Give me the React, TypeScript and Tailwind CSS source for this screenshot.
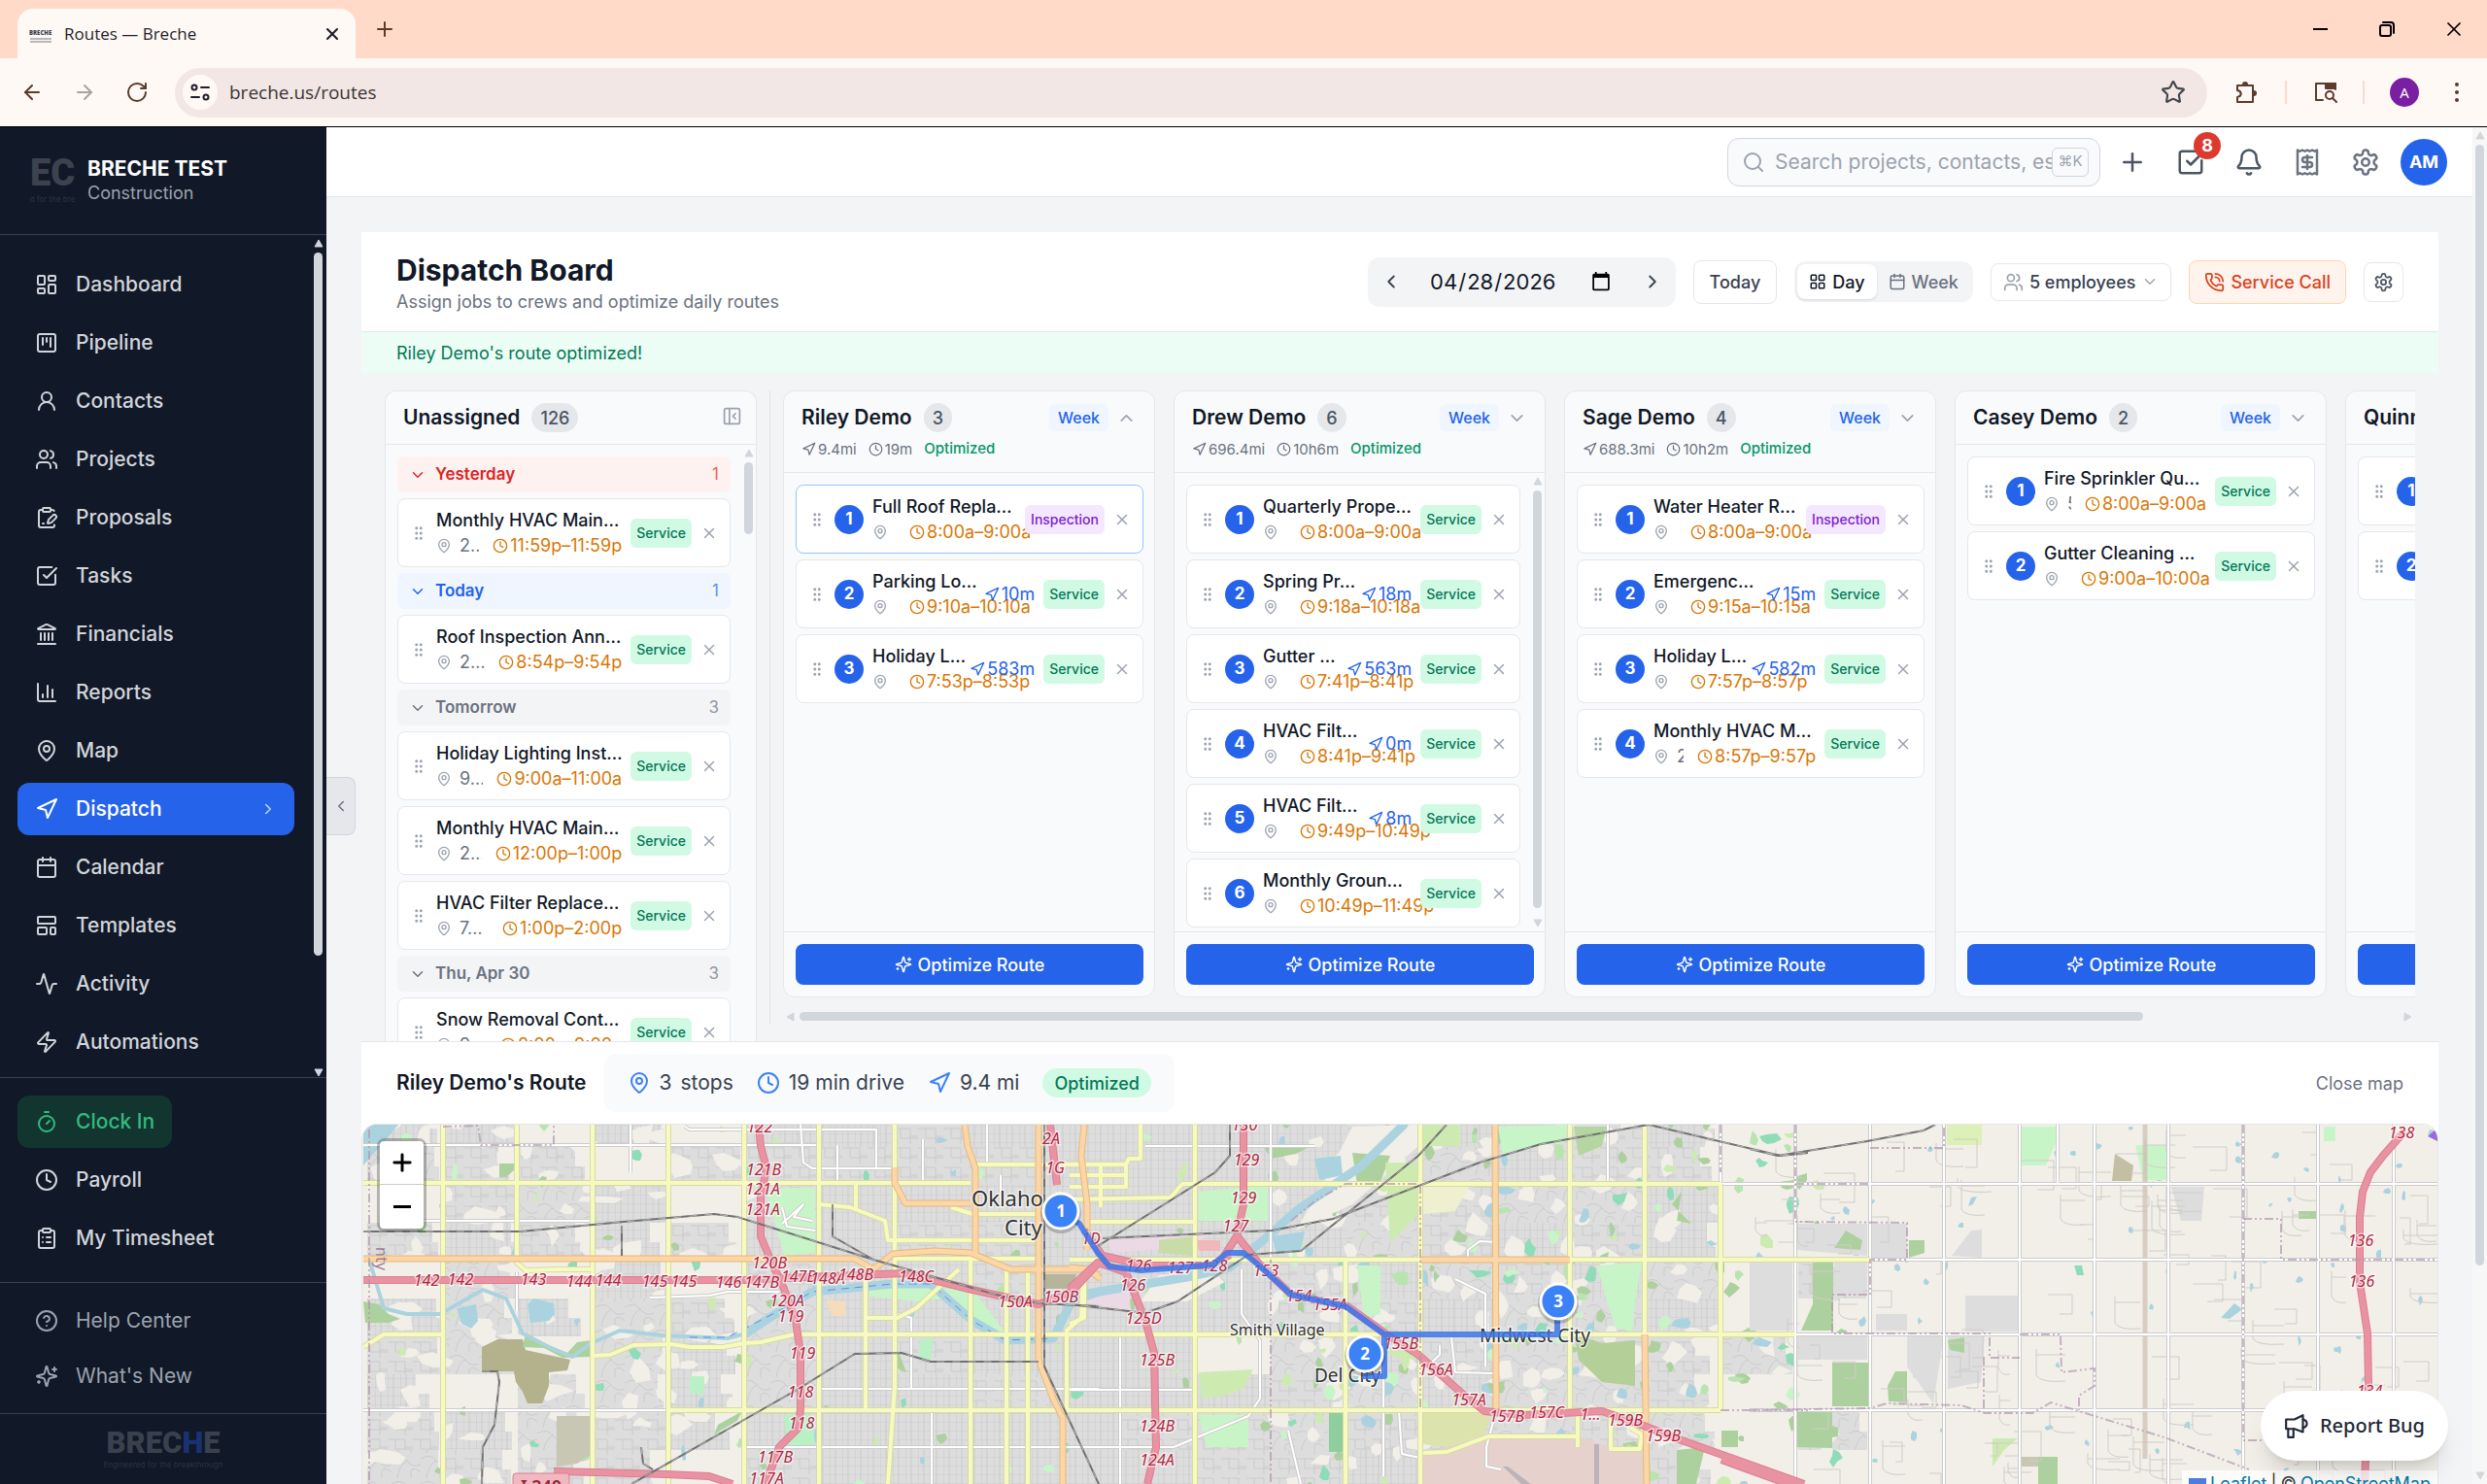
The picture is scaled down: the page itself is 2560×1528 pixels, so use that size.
import React from "react";
import {
  Activity, ArrowLeft, ArrowRight, Bell, Calendar, ChartColumn, ChevronDown, ChevronLeft, ChevronRight, ChevronUp,
  CircleHelp, ClipboardList, ClipboardPenLine, Clock, GripVertical, Landmark, LayoutDashboard, LayoutGrid,
  LayoutTemplate, MapPin, Navigation, PanelLeftClose, PhoneCall, Plus, Receipt, RotateCw, Search, SquareCheckBig,
  SquareKanban, Star, Timer, UserRound, Users, X, Zap,
} from "lucide-react";

type IconProps = { className?: string };
type IconType = React.ComponentType<IconProps>;

/* ---------- Icons ---------- */

const stroke = {
  fill: "none", stroke: "currentColor", strokeWidth: 2, strokeLinecap: "round" as const, strokeLinejoin: "round" as const,
};

function Sparkles({ className }: IconProps) {
  return (
    <svg viewBox="0 0 24 24" className={className} {...stroke} aria-hidden="true">
      <path d="M9.937 15.5A2 2 0 0 0 8.5 14.063l-6.135-1.582a.5.5 0 0 1 0-.962L8.5 9.936A2 2 0 0 0 9.937 8.5l1.582-6.135a.5.5 0 0 1 .963 0L14.063 8.5A2 2 0 0 0 15.5 9.937l6.135 1.581a.5.5 0 0 1 0 .964L15.5 14.063a2 2 0 0 0-1.437 1.437l-1.582 6.135a.5.5 0 0 1-.963 0z" />
      <path d="M20 3v4M22 5h-4M4 17v2M5 18H3" />
    </svg>
  );
}

function Gear({ className }: IconProps) {
  return (
    <svg viewBox="0 0 24 24" className={className} {...stroke} aria-hidden="true">
      <path d="M12.22 2h-.44a2 2 0 0 0-2 2v.18a2 2 0 0 1-1 1.73l-.43.25a2 2 0 0 1-2 0l-.15-.08a2 2 0 0 0-2.73.73l-.22.38a2 2 0 0 0 .73 2.73l.15.1a2 2 0 0 1 1 1.72v.51a2 2 0 0 1-1 1.74l-.15.09a2 2 0 0 0-.73 2.73l.22.38a2 2 0 0 0 2.73.73l.15-.08a2 2 0 0 1 2 0l.43.25a2 2 0 0 1 1 1.73V20a2 2 0 0 0 2 2h.44a2 2 0 0 0 2-2v-.18a2 2 0 0 1 1-1.73l.43-.25a2 2 0 0 1 2 0l.15.08a2 2 0 0 0 2.73-.73l.22-.39a2 2 0 0 0-.73-2.73l-.15-.08a2 2 0 0 1-1-1.74v-.5a2 2 0 0 1 1-1.74l.15-.09a2 2 0 0 0 .73-2.73l-.22-.38a2 2 0 0 0-2.73-.73l-.15.08a2 2 0 0 1-2 0l-.43-.25a2 2 0 0 1-1-1.73V4a2 2 0 0 0-2-2z" />
      <circle cx="12" cy="12" r="3" />
    </svg>
  );
}

function MegaphoneIcon({ className }: IconProps) {
  return (
    <svg viewBox="0 0 24 24" className={className} {...stroke} aria-hidden="true">
      <path d="M2 6h8l8-4v16l-8-3H2z" />
      <path d="M4 15v8h5v-8" />
      <path d="M18 6c5 1 5 7 0 8" />
    </svg>
  );
}

function PuzzleIcon({ className }: IconProps) {
  return (
    <svg viewBox="0 0 24 24" className={className} {...stroke} aria-hidden="true">
      <path d="M3 5h16v17H3v-5c5-1 5-6 0-7z" />
      <path d="M9 4a2 2 0 0 1 4 0zM20 11a2 2 0 0 1 0 4z" fill="currentColor" />
    </svg>
  );
}

function TabSearchIcon({ className }: IconProps) {
  return (
    <svg viewBox="0 0 24 24" className={className} {...stroke} aria-hidden="true">
      <path d="M9 20H2V3h20v6" />
      <path d="M12 3h10v5H12z" fill="currentColor" />
      <circle cx="16" cy="15" r="4" />
      <path d="m19 18 4 4" />
    </svg>
  );
}

/* ---------- Browser chrome ---------- */

function BrowserChrome() {
  return (
    <header className="shrink-0 border-b border-black bg-[#fff9f5] font-['Open_Sans','Noto_Sans',sans-serif]">
      <div className="flex h-[60px] items-end bg-[#ffdac8] pl-[18px]">
        <div className="flex h-[51px] w-[348px] items-center rounded-t-2xl bg-[#fff9f5] pr-[14px] pl-3 text-[#1f1f2b]">
          <svg viewBox="0 0 24 24" className="mr-3 size-6" aria-hidden="true">
            <text x="0" y="13" fontSize="6" fontWeight="800" fill="#3b3f4d">BRECHE</text>
            <path d="M1 17h22M1 20h22" stroke="#b9b7bb" strokeWidth="2" />
          </svg>
          <span className="flex-1 text-[17px]">Routes — Breche</span>
          <button aria-label="Close tab"><X className="size-5" strokeWidth={2.5} /></button>
        </div>
        <button aria-label="New tab" className="mb-[18px] ml-[18px] text-[#5d3a2c]"><Plus className="size-6" /></button>
        <div className="mb-[18px] ml-auto flex items-center gap-[45px] pr-[22px] text-black">
          <button aria-label="Minimize" className="flex size-6 items-center justify-center"><span className="h-[2px] w-[15px] bg-black" /></button>
          <button aria-label="Restore" className="flex size-6 items-center justify-center">
            <svg viewBox="0 0 24 24" className="size-6" {...stroke}><rect x="5" y="8" width="11" height="11" rx="2" /><path d="M8 5h8a3 3 0 0 1 3 3v8" /></svg>
          </button>
          <button aria-label="Close window" className="flex size-6 items-center justify-center"><X className="size-6" strokeWidth={1.75} /></button>
        </div>
      </div>
      <div className="flex h-[70px] items-center rounded-tr-2xl pr-[19px] pl-[21px] text-[#5d3a2c]">
        <div className="flex items-center gap-[30px]">
          <button aria-label="Back"><ArrowLeft className="size-6" /></button>
          <button aria-label="Forward" className="text-[#a8a39f]"><ArrowRight className="size-6" /></button>
          <button aria-label="Reload"><RotateCw className="size-6" /></button>
        </div>
        <div className="ml-[27px] flex h-[51px] flex-1 items-center rounded-full bg-[#f2e7e4] pr-[22px] pl-2">
          <span className="flex size-9 items-center justify-center rounded-full bg-[#fff9f5] text-[#1f1f2b]">
            <svg viewBox="0 0 24 24" className="size-6" {...stroke}><circle cx="6" cy="7" r="2.5" /><path d="M13 7h8M3 17h8" /><circle cx="18" cy="17" r="2.5" /></svg>
          </span>
          <label htmlFor="address" className="sr-only">Address</label>
          <input id="address" defaultValue="breche.us/routes" className="ml-3 h-9 w-0 flex-1 bg-transparent text-[19px] text-[#3d3436] outline-none" />
          <button aria-label="Bookmark" className="text-[#44474f]"><Star className="size-[26px]" /></button>
        </div>
        <div className="ml-7 flex items-center">
          <button aria-label="Extensions"><PuzzleIcon className="size-6" /></button>
          <span className="mx-7 h-6 w-[2px] bg-[#fbd9c9]" />
          <button aria-label="Search tabs"><TabSearchIcon className="size-6" /></button>
          <span className="mx-[26px] h-6 w-[2px] bg-[#f3dcd2]" />
          <span className="flex size-[30px] items-center justify-center rounded-full bg-[#7b1fa2] text-[15px] text-white">A</span>
          <button aria-label="Browser menu" className="ml-[27px]">
            <svg viewBox="0 0 24 24" className="size-6" fill="currentColor"><circle cx="12" cy="4" r="2" /><circle cx="12" cy="12" r="2" /><circle cx="12" cy="20" r="2" /></svg>
          </button>
        </div>
      </div>
    </header>
  );
}

/* ---------- Scroll bars ---------- */

const ARROWS = { up: "M5 1 9 8H1z", down: "M5 9 9 2H1z", left: "M1 5 8 1v8z", right: "M9 5 2 1v8z" };

function Arrow({ dir }: { dir: keyof typeof ARROWS }) {
  return (
    <svg viewBox="0 0 10 10" className="size-[10px] shrink-0" aria-hidden="true">
      <path d={ARROWS[dir]} fill="#d1d5dc" stroke="#d1d5dc" strokeLinejoin="round" />
    </svg>
  );
}

function VScroll({ thumb, className = "", end = true }: { thumb: string; className?: string; end?: boolean }) {
  return (
    <div aria-hidden="true" className={"flex w-[15px] shrink-0 flex-col items-center " + className}>
      <Arrow dir="up" />
      <div className="mt-1 flex w-[9px] flex-1 flex-col">
        <div className={"w-full rounded-full bg-[#d1d5dc] " + thumb} />
      </div>
      {end && <Arrow dir="down" />}
    </div>
  );
}

/* ---------- Sidebar ---------- */

const NAV: [string, IconType][] = [
  ["Dashboard", LayoutDashboard], ["Pipeline", SquareKanban], ["Contacts", UserRound], ["Projects", Users],
  ["Proposals", ClipboardPenLine], ["Tasks", SquareCheckBig], ["Financials", Landmark], ["Reports", ChartColumn],
  ["Map", MapPin], ["Dispatch", Navigation], ["Calendar", Calendar], ["Templates", LayoutTemplate],
  ["Activity", Activity], ["Automations", Zap],
];

function NavItem({ label, Icon, className }: { label: string; Icon: IconType; className: string }) {
  return (
    <a href="#" className={"flex items-center gap-[18px] rounded-xl px-[18px] text-[21px] " + className}>
      <Icon className="size-6 shrink-0" />
      <span>{label}</span>
      {label === "Dispatch" && <ChevronRight className="ml-auto size-[18px] text-blue-200" />}
    </a>
  );
}

function Sidebar() {
  return (
    <aside className="flex w-[336px] shrink-0 flex-col bg-[#111827]">
      <div className="flex h-[111px] shrink-0 items-center border-b border-[#374151] px-[30px]">
        <div className="w-[48px] text-center text-[#3c434f]">
          <div className="font-['Roboto',sans-serif] text-[38px] leading-[34px] font-black">EC</div>
          <div className="mt-1 text-[8px] leading-[12px] whitespace-nowrap text-[#2d3542]">d for the bre</div>
        </div>
        <div className="ml-3">
          <div className="text-[21px] leading-[26px] font-bold text-white">BRECHE TEST</div>
          <div className="text-[18px] leading-[24px] text-[#9ca3af]">Construction</div>
        </div>
      </div>
      <div className="flex min-h-0 flex-1 pt-1 pr-px">
        <nav className="flex flex-1 flex-col gap-[6px] pt-5 pr-[17px] pl-[18px]">
          {NAV.map(([label, Icon]) => (
            <NavItem
              key={label} label={label} Icon={Icon}
              className={label === "Dispatch" ? "h-[54px] shrink-0 bg-[#2563eb] font-medium text-white" : "h-[54px] shrink-0 font-medium text-[#d1d5db]"}
            />
          ))}
        </nav>
        <VScroll thumb="h-[724px]" />
      </div>
      <nav className="flex flex-col items-start gap-[6px] border-t border-[#374151] px-[18px] py-[18px]">
        <NavItem label="Clock In" Icon={Timer} className="h-[54px] bg-[#12352f] font-medium text-[#34b981]" />
        <NavItem label="Payroll" Icon={Clock} className="h-[54px] font-medium text-[#d1d5db]" />
        <NavItem label="My Timesheet" Icon={ClipboardList} className="h-[54px] font-medium text-[#d1d5db]" />
      </nav>
      <nav className="flex flex-col gap-[6px] border-t border-[#374151] px-[18px] py-[13px]">
        <NavItem label="Help Center" Icon={CircleHelp} className="h-[51px] text-[#9ca3af]" />
        <NavItem label="What's New" Icon={Sparkles} className="h-[51px] text-[#9ca3af]" />
      </nav>
      <div className="h-[73px] border-t border-[#374151] pt-[15px] text-center">
        <div className="font-['Roboto',sans-serif] text-[31px] leading-[30px] font-black text-[#3a414e]">
          BREC<span className="text-[#1b3272]">H</span>E
        </div>
        <div className="text-[8px] leading-[14px] text-[#2b3442]">Engineered for the breakthrough</div>
      </div>
    </aside>
  );
}

/* ---------- Top bar ---------- */

function TopBar() {
  return (
    <div className="flex h-[72px] shrink-0 items-center justify-end border-b border-[#e5e7eb] bg-white pr-[26px] text-[#4b5563]">
      <div className="flex h-[50px] w-[384px] items-center rounded-xl border border-[#d1d5dc] bg-[#f9fafb] pr-[11px] pl-[14px]">
        <Search className="size-6 shrink-0 text-[#9ca3af]" />
        <label htmlFor="search" className="sr-only">Search</label>
        <input id="search" placeholder="Search projects, contacts, estimates..." className="ml-[10px] w-0 flex-1 bg-transparent text-[21px] outline-none placeholder:text-[#9ca3af]" />
        <kbd className="flex h-[30px] w-[38px] items-center justify-center rounded-md border border-[#d1d5dc] font-['Inter','DejaVu_Sans',sans-serif] text-[15px] text-[#9ca3af]">⌘K</kbd>
      </div>
      <div className="ml-[18px] flex items-center gap-[30px] pr-9">
        <button aria-label="Add"><Plus className="size-[30px]" /></button>
        <button aria-label="Tasks" className="relative">
          <SquareCheckBig className="size-[30px]" />
          <span className="absolute -top-4 -right-4 flex size-7 items-center justify-center rounded-full bg-[#dc3a2f] text-[18px] font-bold text-white">8</span>
        </button>
        <button aria-label="Notifications"><Bell className="size-[30px]" /></button>
        <button aria-label="Receipts"><Receipt className="size-[30px] text-[#6b7280]" /></button>
        <button aria-label="Settings"><Gear className="size-[30px] text-[#6b7280]" /></button>
      </div>
      <button className="-ml-[15px] flex size-12 items-center justify-center rounded-full bg-[#2563eb] text-[18px] font-bold text-white">AM</button>
    </div>
  );
}

/* ---------- Board header ---------- */

function BoardHeader() {
  return (
    <div className="flex h-[103px] shrink-0 items-center justify-between border-b border-[#e5e7eb] bg-white px-9">
      <div className="pt-[2px]">
        <h1 className="text-[30px] leading-[38px] font-bold text-[#111827]">Dispatch Board</h1>
        <p className="text-[18px] leading-[27px] text-[#6b7280]">Assign jobs to crews and optimize daily routes</p>
      </div>
      <div className="flex items-center gap-[18px] text-[18px] text-[#374151]">
        <div className="flex h-[51px] w-[317px] items-center justify-between rounded-xl bg-[#f3f4f6] px-[13px]">
          <button aria-label="Previous day"><ChevronLeft className="size-[22px]" /></button>
          <label htmlFor="day" className="sr-only">Day</label>
          <input id="day" type="date" defaultValue="2026-04-28" className="w-[190px] bg-transparent text-[22px] text-[#111827] outline-none" />
          <button aria-label="Next day"><ChevronRight className="size-[22px]" /></button>
        </div>
        <button className="h-[45px] rounded-lg border border-[#e5e7eb] px-4 font-medium">Today</button>
        <div className="flex h-[42px] items-center rounded-xl bg-[#f3f4f6] p-[3px]">
          <button className="flex h-9 items-center gap-[6px] rounded-lg bg-white px-3 font-medium text-[#111827] shadow-sm"><LayoutGrid className="size-[18px]" />Day</button>
          <button className="flex h-9 items-center gap-[6px] px-3 font-medium text-[#6b7280]"><Calendar className="size-[18px]" />Week</button>
        </div>
        <button className="flex h-[39px] items-center gap-[6px] rounded-lg border border-[#e5e7eb] px-3 font-medium">
          <Users className="size-[21px] text-[#9ca3af]" />5 employees<ChevronDown className="size-[18px] text-[#9ca3af]" />
        </button>
        <button className="flex h-[45px] items-center gap-[6px] rounded-lg border border-[#fed7aa] bg-[#fff4ed] px-[15px] font-medium text-[#d9431e]">
          <PhoneCall className="size-[21px]" />Service Call
        </button>
        <button aria-label="Board settings" className="flex size-[41px] items-center justify-center rounded-lg border border-[#e5e7eb]"><Gear className="size-[21px] text-[#4b5563]" /></button>
      </div>
    </div>
  );
}

/* ---------- Job cards ---------- */

type Job = { title: string; time: string; addr?: string; travel?: string; kind?: "Inspection" | "Service" };

function JobCard({ job, n, active }: { job: Job; n?: number; active?: boolean }) {
  return (
    <article className={"flex h-[71px] shrink-0 items-center gap-[9px] rounded-lg border bg-white px-3 " + (active ? "border-[#93c5fd]" : "border-[#e5e7eb]")}>
      <GripVertical className="size-[18px] shrink-0 text-[#9ca3af]" />
      {n && <span className="flex size-[30px] shrink-0 items-center justify-center rounded-full bg-[#2563eb] text-[17px] font-bold text-white">{n}</span>}
      <div className="min-w-0 flex-1 whitespace-nowrap">
        <h4 className="text-[18px] leading-[26px] font-medium text-[#111827]">{job.title}</h4>
        <div className="flex items-center text-[18px] leading-[26px]">
          <MapPin className="mr-2 size-4 shrink-0 text-[#9ca3af]" />
          <span className="mr-[14px] min-w-0 flex-1 overflow-hidden text-[#6b7280]">{job.addr}</span>
          <span className="flex shrink-0 items-center gap-[2px] text-[#d97706]"><Clock className="size-4" />{job.time}</span>
        </div>
      </div>
      {job.travel && (
        <span className="flex shrink-0 items-center gap-[2px] text-[18px] text-[#2563eb]"><Navigation className="size-4" />{job.travel}</span>
      )}
      <span className={"z-1 flex h-[30px] shrink-0 items-center rounded-md px-[6px] text-[14px] font-medium " + (job.kind === "Inspection" ? "bg-[#f3e8ff] text-[#7e22ce]" : "bg-[#d1fae5] text-[#047857]")}>
        {job.kind ?? "Service"}
      </span>
      <button aria-label={"Remove " + job.title} className="shrink-0"><X className="size-[18px] text-[#9ca3af]" /></button>
    </article>
  );
}

const GROUPS: { name: string; count: number; tone: string; jobs: Job[] }[] = [
  { name: "Yesterday", count: 1, tone: "bg-[#fef2f0] text-[#dc2626]", jobs: [{ title: "Monthly HVAC Main…", addr: "2..", time: "11:59p–11:59p" }] },
  { name: "Today", count: 1, tone: "bg-[#eff6ff] text-[#2563eb]", jobs: [{ title: "Roof Inspection Ann…", addr: "2…", time: "8:54p–9:54p" }] },
  {
    name: "Tomorrow", count: 3, tone: "bg-[#f3f4f6] text-[#6b7280]", jobs: [
      { title: "Holiday Lighting Inst…", addr: "9…", time: "9:00a–11:00a" },
      { title: "Monthly HVAC Main…", addr: "2…", time: "12:00p–1:00p" },
      { title: "HVAC Filter Replace…", addr: "7…", time: "1:00p–2:00p" },
    ],
  },
  { name: "Thu, Apr 30", count: 3, tone: "bg-[#f3f4f6] text-[#6b7280]", jobs: [{ title: "Snow Removal Cont…", addr: "9…", time: "8:00a–9:00a" }] },
];

function Count({ value }: { value: number }) {
  return <span className="flex h-[30px] min-w-[29px] items-center justify-center rounded-full bg-[#e5e7eb] px-[9px] text-[18px] font-medium text-[#4b5563]">{value}</span>;
}

function Unassigned() {
  return (
    <section className="flex w-[383px] shrink-0 flex-col rounded-t-xl border border-b-0 border-[#e5e7eb] bg-[#f9fafb]">
      <div className="flex h-[55px] shrink-0 items-center gap-3 border-b border-[#e5e7eb] pr-[14px] pl-[18px]">
        <h2 className="text-[21px] font-semibold text-[#111827]">Unassigned</h2>
        <Count value={126} />
        <button aria-label="Collapse unassigned" className="mb-1 ml-auto"><PanelLeftClose className="size-[21px] text-[#9ca3af]" /></button>
      </div>
      <div className="flex min-h-0 flex-1">
        <div className="flex min-h-0 flex-1 flex-col gap-[6px] overflow-hidden py-3 pr-[11px] pl-3">
          {GROUPS.map((g) => (
            <React.Fragment key={g.name}>
              <button className={"flex h-[37px] shrink-0 items-center rounded-md px-3 text-[17px] font-semibold " + g.tone}>
                <ChevronDown className="mr-[9px] size-[18px]" />
                {g.name}
                <span className="ml-auto font-normal opacity-70">{g.count}</span>
              </button>
              {g.jobs.map((j) => <JobCard key={j.title} job={j} />)}
            </React.Fragment>
          ))}
        </div>
        <VScroll thumb="h-[74px]" className="pt-1" end={false} />
      </div>
    </section>
  );
}

type Crew = { name: string; miles?: string; drive?: string; open?: boolean; scroll?: boolean; total: number; jobs: Job[] };

const CREWS: Crew[] = [
  {
    name: "Riley Demo", miles: "9.4mi", drive: "19m", open: true, total: 3, jobs: [
      { title: "Full Roof Repla…", time: "8:00a–9:00a", kind: "Inspection" },
      { title: "Parking Lo…", time: "9:10a–10:10a", travel: "10m" },
      { title: "Holiday L…", time: "7:53p–8:53p", travel: "583m" },
    ],
  },
  {
    name: "Drew Demo", miles: "696.4mi", drive: "10h6m", scroll: true, total: 6, jobs: [
      { title: "Quarterly Prope…", time: "8:00a–9:00a" },
      { title: "Spring Pr…", time: "9:18a–10:18a", travel: "18m" },
      { title: "Gutter …", time: "7:41p–8:41p", travel: "563m" },
      { title: "HVAC Filt…", time: "8:41p–9:41p", travel: "0m" },
      { title: "HVAC Filt…", time: "9:49p–10:49p", travel: "8m" },
      { title: "Monthly Groun…", time: "10:49p–11:49p" },
    ],
  },
  {
    name: "Sage Demo", miles: "688.3mi", drive: "10h2m", total: 4, jobs: [
      { title: "Water Heater R…", time: "8:00a–9:00a", kind: "Inspection" },
      { title: "Emergenc…", time: "9:15a–10:15a", travel: "15m" },
      { title: "Holiday L…", time: "7:57p–8:57p", travel: "582m" },
      { title: "Monthly HVAC M…", addr: "2", time: "8:57p–9:57p" },
    ],
  },
  {
    name: "Casey Demo", total: 2, jobs: [
      { title: "Fire Sprinkler Qu…", addr: "5", time: "8:00a–9:00a" },
      { title: "Gutter Cleaning …", time: "9:00a–10:00a" },
    ],
  },
  {
    name: "Quinn Demo", total: 2, jobs: [
      { title: "Gutter Repair …", time: "8:00a–9:00a" },
      { title: "Window Seal …", time: "9:00a–10:00a" },
    ],
  },
];

function CrewColumn({ crew }: { crew: Crew }) {
  const Chevron = crew.open ? ChevronUp : ChevronDown;
  return (
    <section className="flex w-[383px] shrink-0 flex-col rounded-xl border border-[#e5e7eb] bg-[#f9fafb]">
      <div className="shrink-0 border-b border-[#e5e7eb] px-[18px]">
        <div className="flex h-[54px] items-center">
          <h2 className="mr-3 text-[21px] font-semibold text-[#111827]">{crew.name}</h2>
          <Count value={crew.total} />
          <button className="ml-auto h-7 rounded-md bg-[#eff6ff] px-[9px] text-[16px] font-medium text-[#2563eb]">Week</button>
          <button aria-label={"Toggle " + crew.name} className="ml-2"><Chevron className="size-[21px] text-[#9ca3af]" /></button>
        </div>
        {crew.miles && (
          <div className="flex h-[29px] items-start gap-3 text-[15px] leading-[10px] text-[#6b7280]">
            <span className="flex h-[11px] items-center gap-[2px]"><Navigation className="size-[15px]" />{crew.miles}</span>
            <span className="flex h-[11px] items-center gap-[2px]"><Clock className="size-[15px]" />{crew.drive}</span>
            <span className="font-medium text-[#059669]">Optimized</span>
          </div>
        )}
      </div>
      <div className="flex min-h-0 flex-1">
        <div className={"flex min-w-0 flex-1 flex-col gap-[6px] overflow-hidden py-3 pl-3 " + (crew.scroll ? "pr-[10px]" : "pr-[11px]")}>
          {crew.jobs.map((j, i) => <JobCard key={i} job={j} n={i + 1} active={crew.open && i === 0} />)}
        </div>
        {crew.scroll && <VScroll thumb="h-[430px]" className="py-1" />}
      </div>
      <div className="shrink-0 border-t border-[#e5e7eb] py-3 pr-[11px] pl-3">
        <button className="flex h-[42px] w-full items-center justify-center gap-[6px] rounded-lg bg-[#2563eb] text-[18px] font-medium text-white">
          <Sparkles className="size-[18px]" />Optimize Route
        </button>
      </div>
    </section>
  );
}

function Board() {
  return (
    <div className="flex h-[688px] shrink-0 overflow-hidden pt-[18px] pr-6 pl-6">
      <Unassigned />
      <div className="mx-[13px] mb-[18px] w-px shrink-0 bg-[#e0e2e7]" />
      <div className="mb-[18px] flex min-w-0 flex-1 flex-col">
        <div className="flex min-h-0 flex-1 gap-[19px] overflow-hidden">
          {CREWS.map((c) => <CrewColumn key={c.name} crew={c} />)}
        </div>
        <div aria-hidden="true" className="mt-[15px] flex h-3 items-start gap-1 px-[3px]">
          <Arrow dir="left" />
          <div className="flex-1"><div className="h-[9px] w-[84%] rounded-full bg-[#d1d5dc]" /></div>
          <Arrow dir="right" />
        </div>
      </div>
    </div>
  );
}

/* ---------- Map ---------- */

/* Each sheet of the map has its own drawing grid; SHEET gives its left edge. */
const SHEET = { W: -2, C: 728, E: 1428 };
type Sheet = keyof typeof SHEET;
const px = (s: Sheet, x: number) => Math.round(SHEET[s] + x / 2.063);
const py = (y: number) => Math.round(y / 3 - 18);
const line = (s: Sheet, pts: string) => {
  const v = pts.split(" ").map(Number);
  let d = "";
  for (let i = 0; i < v.length; i += 2) d += (i ? "L" : "M") + px(s, v[i]) + " " + py(v[i + 1]);
  return d;
};

type Shape = [Sheet, string];

const YELLOW: Shape[] = [
  ["W", "175 55 175 1164"], ["W", "333 55 333 480 350 505 420 500 490 500"], ["W", "493 55 493 1164"], ["W", "653 55 653 1164"],
  ["W", "814 55 814 1164"], ["W", "973 55 973 1164"], ["W", "1134 55 1134 860 1120 1164"], ["W", "1295 460 1295 1164"],
  ["W", "6 235 1295 235"], ["W", "6 740 50 702 175 702"], ["W", "493 768 530 765 580 735 660 732 700 742 770 742 815 728 850 725 920 702 1568 702"],
  ["W", "653 937 1568 937"], ["W", "973 300 1040 310 1115 350 1120 410 1440 410"], ["W", "1053 240 1053 320"], ["W", "1073 530 1073 937"],
  ["W", "1073 652 1140 652 1180 620 1270 500"], ["W", "1134 468 1440 468"], ["W", "1300 178 1568 178"], ["W", "1255 310 1300 330 1440 330"],
  ["W", "1372 500 1372 1164"], ["W", "1418 500 1418 1164"], ["W", "1500 937 1500 690 1530 650 1535 520"],
  ["C", "0 178 120 178 125 160 150 160 150 55"], ["C", "0 285 215 280 240 238 1383 238"], ["C", "0 210 120 210"], ["C", "0 245 120 245 120 178"], ["C", "65 178 65 310"],
  ["C", "35 353 270 353"], ["C", "267 55 267 1164"], ["C", "0 470 745 470"], ["C", "1063 470 1383 470"],
  ["C", "0 703 1540 703"], ["C", "585 470 585 1164"], ["C", "745 55 745 1164"], ["C", "1063 55 1063 937"],
  ["C", "1222 55 1222 703"], ["C", "1383 238 1383 937"], ["C", "0 937 1383 937"], ["C", "750 1068 800 1065 890 1018 1078 1018"],
  ["C", "1078 950 1078 1050"], ["C", "1150 950 1150 1057 1210 1057 1215 1010 1190 990"], ["C", "1383 470 1568 470"],
  ["C", "0 670 30 650 30 540"], ["E", "0 472 255 472"], ["E", "0 702 90 702"],
];
const WHITE: Shape[] = [
  ["W", "6 118 970 118"], ["W", "100 352 490 352"], ["W", "6 937 653 937"], ["W", "975 870 1568 870"], ["W", "820 1050 1568 1050"],
  ["W", "573 55 573 200"], ["W", "935 55 940 170 960 188 1130 188"], ["W", "690 60 700 68 1095 68 1095 188"], ["W", "1012 118 1012 240"],
  ["W", "333 510 333 630"], ["W", "615 587 740 582 780 570 890 570"], ["W", "1170 870 1170 650 1140 640"], ["W", "1213 937 1213 1164"],
  ["W", "895 310 905 370 965 380"], ["W", "895 360 940 300 920 340 960 350"], ["W", "1195 100 1195 235"], ["W", "1330 55 1330 170"], ["W", "1360 210 1360 300"],
  ["C", "160 120 520 120"], ["C", "427 55 427 470"], ["C", "0 872 265 872"], ["C", "0 1050 220 1050 380 955 405 900 405 720 365 640 365 500"],
  ["C", "107 703 107 1164"], ["C", "845 470 845 440 870 415 905 418"], ["C", "820 530 883 575 883 800"], ["C", "785 735 785 765 760 800"],
  ["C", "810 710 820 820 900 822"], ["C", "667 703 667 1140"], ["C", "700 940 705 1070 745 1082"], ["C", "465 1000 490 1164"],
  ["C", "905 940 885 1050 885 1110 915 1120"], ["C", "1143 55 1143 235"], ["C", "1383 55 1383 238"], ["C", "1383 238 1568 238"],
  ["E", "0 238 1464 238"], ["E", "255 472 1464 472"], ["E", "90 703 1464 703"], ["E", "0 937 1464 937"],
  ["E", "97 55 97 1164"], ["E", "255 55 255 1164"], ["E", "413 55 413 1164"], ["E", "573 55 573 1164"], ["E", "655 55 655 238"],
  ["E", "733 55 733 1164"], ["E", "890 55 890 1164"], ["E", "1047 55 1047 1164"], ["E", "1207 55 1207 1164"], ["E", "1367 55 1367 1164"],
];
const ORANGE: Shape[] = [
  ["W", "6 468 1050 468 1090 500 1130 452 1220 445 1295 450 1380 500 1540 500 1568 520"], ["W", "1283 55 1290 120 1305 190 1305 450"],
  ["W", "1134 185 1134 235 1158 298 1295 298"], ["W", "1440 55 1440 780 1470 900 1492 960 1492 1164"],
  ["C", "30 55 25 150 38 300 38 440"], ["C", "0 495 40 500 65 530"],
  ["C", "745 470 1063 470"], ["C", "903 55 905 937"], ["C", "1222 703 1225 1164"],
];
const RED: Shape[] = [
  ["W", "846 55 850 120 862 190 850 280 850 400 870 470 900 560 925 660 935 760 935 930 930 990 890 1050 860 1164"],
  ["W", "6 533 820 535 900 528 1100 515 1160 512 1300 565 1440 610 1510 570 1568 480"],
  ["W", "410 1125 500 1128 650 1135 740 1140 790 1164"], ["W", "1465 55 1480 240"],
  ["C", "370 55 370 300 355 400 325 465"], ["C", "355 395 400 480 470 580 590 615 670 700 740 765 830 880 880 940 960 950 1130 940 1220 985 1300 1030 1560 1164"],
  ["C", "0 560 60 480 120 510 160 660 180 760 183 1050 165 1164"], ["C", "30 380 70 460 160 490 300 490 340 455"],
  ["E", "-60 1090 100 1172"],
  ["E", "1390 75 1345 150 1318 200 1302 260 1295 340 1295 420 1295 540 1312 700 1315 860 1305 1164"],
];
const RAIL: Shape[] = [
  ["W", "6 385 340 385 560 355 750 330 800 340 900 385 1090 470 1350 580 1440 605 1568 615"], ["W", "555 365 555 460"], ["W", "1003 300 1003 400 1090 470"],
  ["W", "575 1164 930 870 1050 762 1150 760 1210 787 1440 787"], ["W", "258 815 290 815 295 850 285 980 260 1050 258 1164"], ["W", "1453 55 1453 800 1568 1164"],
  ["W", "597 1050 600 1100 620 1120"],
  ["C", "340 55 340 150 310 200 60 430"], ["C", "70 405 430 380 560 345 870 170 1000 115 1230 55 1510 150 1568 140"],
  ["C", "800 55 740 150 490 445 380 455 230 600 160 635 0 610"], ["E", "0 130 60 150 250 105 370 72 395 55"],
];
const RIVER: Shape[] = [
  ["W", "820 700 900 620 960 570 1130 545 1210 545 1300 660 1370 720 1470 715 1510 600 1568 570"],
  ["C", "0 585 250 525 340 495 420 400 480 320 620 180 710 55"],
];
const CREEK: Shape[] = [
  ["W", "20 480 50 620 100 640 170 640 260 565 310 590 345 700 400 740 450 770 490 730 550 690 640 705 780 715 820 700"],
];
const AREAS: [Sheet, string, string][] = [
  ["W", "6 55 80 55 60 90 6 180", "#aad3df"], ["W", "865 270 900 250 965 250 965 450 900 460", "#c8f5c8"],
  ["W", "258 740 290 717 345 717 350 750 445 780 440 812 400 820 400 860 385 915 355 915 345 880 330 850 325 815 258 815", "#b3b28c"],
  ["W", "417 955 490 955 490 1070 460 1100 417 1110", "#c7c7b4"], ["W", "1080 545 1210 545 1240 590 1180 600 1080 585", "#c8f5c8"],
  ["W", "1225 560 1300 560 1370 700 1300 670", "#c8f5c8"], ["W", "205 620 245 610 250 660 235 685 215 670", "#aad3df"], ["W", "355 610 370 590 410 605 412 640 400 660 360 665", "#aad3df"],
  ["W", "990 595 1030 600 1030 645 1000 645", "#f5dcba"], ["W", "1455 515 1520 515 1510 560 1455 560", "#b8b49a"], ["W", "1190 715 1215 715 1210 780 1185 775", "#b9f0c6"],
  ["W", "700 830 730 830 730 885 700 885", "#b9f0c6"], ["W", "900 950 960 950 965 1050 905 1050", "#b9f0c6"], ["W", "295 175 325 175 325 195 310 215 295 215", "#add19e"],
  ["W", "6 600 40 610 60 640 85 655 60 665 10 665", "#add19e"], ["W", "350 700 400 735 440 760 460 725 490 720 490 770 430 775 390 745 345 740", "#add19e"], ["W", "760 980 810 940 800 970 750 1010", "#add19e"],
  ["W", "1130 710 1130 800 1160 820", "#add19e"],
  ["C", "275 260 420 240 420 350 275 350", "#c8f5c8"], ["C", "80 410 300 390 260 430 90 450", "#ecd9e6"], ["C", "20 600 125 560 130 630", "#ecd9e6"],
  ["C", "190 520 300 505 330 540 250 600 150 600", "#f2efe9"],
  ["C", "270 410 320 410 320 445 275 445", "#f0b8b8"], ["C", "190 410 260 400 260 460 190 450", "#c8dca8"], ["C", "430 400 500 385 490 440 440 450", "#aad3df"],
  ["C", "600 60 745 55 740 120 600 300 480 380 540 230", "#f2efe9"],
  ["C", "520 160 575 150 580 210 530 225", "#aad3df"], ["C", "410 120 520 115 480 145 430 160", "#add19e"], ["C", "600 140 680 150 660 230 610 240", "#add19e"],
  ["C", "745 55 830 55 830 120 745 120", "#cdebb0"], ["C", "670 170 740 170 740 330 680 420", "#cdebb0"], ["C", "750 245 850 240 820 320 750 330", "#eef0cf"],
  ["C", "910 60 1060 55 1050 110 980 120 920 150", "#c8f5c8"], ["C", "1070 60 1140 60 1130 120 1080 150", "#b5d6a0"], ["C", "610 490 660 490 660 640 625 650", "#c8f5c8"],
  ["C", "1120 490 1215 480 1200 600 1195 690 1160 680 1140 600", "#c8f5c8"], ["C", "1070 700 1130 730 1200 720 1200 860 1130 850 1080 780", "#b5cf98"], ["C", "670 750 740 755 740 780 690 775", "#cdebb0"],
  ["C", "275 820 390 810 370 870 330 890 280 900", "#cdebb0"], ["C", "275 950 380 950 380 1050 290 1050", "#c8f5c8"], ["C", "550 945 582 945 582 1065 550 1065", "#8fcf9d"],
  ["C", "750 940 900 940 880 1010 800 1050 750 1040", "#dde3ac"], ["C", "750 1068 890 1018 1080 1018 1150 1050 1220 1060 1222 1164 750 1164", "#e6d1cd"],
  ["C", "930 1110 980 1164 960 1164 920 1110", "#bbb4ba"], ["C", "1115 1040 1125 1040 1125 1164 1115 1164", "#bbb4ba"],
  ["C", "1290 1060 1350 1050 1330 1164 1290 1164", "#add19e"], ["C", "1385 1000 1420 1000 1420 1050 1385 1050", "#add19e"], ["C", "1280 300 1300 260 1290 350 1320 360", "#add19e"],
  ["E", "0 480 90 480 90 690 0 690", "#dddddd"], ["E", "135 480 178 480 178 690 110 690 135 610", "#add19e"], ["E", "180 480 250 480 250 580 180 580", "#dddddd"],
  ["E", "175 788 252 788 252 925 175 925", "#add19e"], ["E", "100 937 175 937 175 985 188 990 188 1018 175 1020 175 1052 100 1050", "#add19e"],
  ["E", "292 860 310 815 335 815 335 912 295 910", "#add19e"], ["E", "613 1080 655 1080 655 1164 613 1164", "#add19e"], ["E", "578 1080 613 1080 613 1110 578 1110", "#c7c7b4"],
  ["E", "578 60 650 60 650 110 630 180 578 180", "#c8f5c8"], ["E", "820 118 885 118 885 225 835 225", "#c8f5c8"], ["E", "418 55 493 55 493 118 418 118", "#dcf0b8"],
  ["E", "775 145 815 180 810 228 770 228", "#c2bfa2"], ["E", "335 705 413 705 390 915 335 800", "#dddddd"], ["E", "420 705 500 705 490 850 420 870", "#dddddd"],
  ["E", "420 720 455 710 455 760 425 750", "#add19e"], ["E", "458 583 570 583 570 692 458 692", "#dddddd"], ["E", "268 640 335 640 335 690 268 690", "#dddddd"],
  ["E", "430 460 470 380 493 378 493 465", "#dddddd"], ["E", "895 245 965 245 960 350 915 350", "#dddddd"], ["E", "255 360 335 360 335 465 255 465", "#dddddd"],
  ["E", "338 412 372 410 372 450 338 465", "#add19e"], ["E", "100 360 250 360 250 460 100 440", "#dddddd"], ["E", "205 380 240 410 235 440 180 435", "#add19e"],
  ["E", "100 705 250 705 250 780 100 780", "#dddddd"], ["E", "515 1022 570 1022 540 1060 515 1110", "#cdebb0"], ["E", "1000 650 1030 605 1045 625 1020 655", "#aad3df"],
  ["E", "1165 322 1205 322 1205 345 1165 345", "#add19e"], ["E", "1220 60 1245 60 1245 105 1220 105", "#c8f5c8"], ["E", "1440 90 1455 72 1464 90 1464 108", "#9a6bdc"],
  ["E", "690 490 705 490 710 520 695 520", "#8fdcb8"], ["E", "470 280 482 275 475 300 465 305", "#aad3df"],
];
const BORDERS: Shape[] = [
  ["W", "18 70 18 1164"], ["W", "175 60 250 58 255 118 410 118 410 55"], ["C", "427 470 427 1164"], ["C", "470 350 520 290 585 238 740 238"], ["C", "745 240 745 937"],
  ["C", "1383 937 1568 937"], ["C", "1383 55 1383 200"], ["E", "97 55 97 355 335 358 335 472 255 472 255 580 175 580 175 700 510 700 510 775 573 775"],
  ["E", "255 125 413 125 413 55"], ["E", "97 238 255 238"], ["E", "573 703 660 703 662 820 733 808 733 860 700 890 700 937"], ["E", "0 937 255 930 290 915 450 920 500 945 600 945 640 912 733 955 880 1020 1060 1120"],
  ["E", "1047 55 1047 1030 1130 1030"], ["E", "1047 345 1128 345 1128 472 1464 472"], ["E", "497 770 497 937"],
];
const ROUTE = line("C", "-15 330 20 360 60 450 85 492 150 505 240 495 305 485 335 450 370 450 400 485 470 578 585 615 668 702 668 832 620 832");
const ROUTE_END = line("C", "668 702 1035 702 1035 600");

const EXITS: [Sheet, number, number, string][] = [
  ["W", 848, 68, "122"], ["W", 857, 202, "121B"], ["W", 855, 260, "121A"], ["W", 855, 324, "121A"], ["W", 868, 490, "120B"], ["W", 905, 606, "120A"],
  ["W", 913, 654, "119"], ["W", 938, 768, "119"], ["W", 935, 888, "118"], ["W", 936, 984, "118"], ["W", 880, 1090, "117B"], ["W", 862, 1155, "117A"],
  ["W", 140, 543, "142"], ["W", 212, 540, "142"], ["W", 367, 540, "143"], ["W", 465, 545, "144"], ["W", 527, 543, "144"], ["W", 625, 547, "145"], ["W", 688, 545, "145"],
  ["W", 782, 549, "146"], ["W", 852, 549, "147B"], ["W", 930, 532, "147B"], ["W", 992, 537, "148A"], ["W", 1052, 526, "148B"], ["W", 1181, 530, "148C"],
  ["W", 1390, 610, "150A"], ["W", 1488, 594, "150B"], ["W", 1467, 104, "2A"], ["W", 1475, 194, "1G"],
  ["C", 372, 62, "130"], ["C", 375, 172, "129"], ["C", 370, 288, "129"], ["C", 352, 374, "127"], ["C", 45, 415, "1D"], ["C", 147, 498, "126"], ["C", 135, 558, "126"],
  ["C", 235, 504, "127"], ["C", 308, 498, "128"], ["C", 157, 660, "125D"], ["C", 185, 790, "125B"], ["C", 185, 994, "124B"], ["C", 185, 1098, "124A"],
  ["C", 417, 512, "153"], ["C", 487, 592, "154"], ["C", 553, 618, "155A"], ["C", 703, 738, "155B"], ["C", 778, 818, "156A"], ["C", 848, 912, "157A"],
  ["C", 928, 962, "157B"], ["C", 1012, 950, "157C"], ["C", 1105, 958, "1…"], ["C", 1181, 974, "159B"], ["C", 1260, 1022, "159B"],
  ["E", 1385, 86, "138"], ["E", 1297, 420, "136"], ["E", 1300, 547, "136"], ["E", 1316, 884, "134"],
];

/* Street blocks and greenery between the section-line roads. */
function seeded(seed: number) {
  let s = seed;
  return () => ((s = (s * 16807) % 2147483647) / 2147483647);
}
const rnd = seeded(90127);

/* An irregular closed outline around a centre point. */
function blob(cx: number, cy: number, rx: number, ry: number) {
  let d = "";
  for (let i = 0; i < 7; i++) {
    const a = (i / 7) * Math.PI * 2;
    const k = 0.5 + rnd() * 0.7;
    d += (i ? "L" : "M") + Math.round(cx + Math.cos(a) * rx * k) + " " + Math.round(cy + Math.sin(a) * ry * k);
  }
  return d + "Z";
}

type Patch = { d: string; fill: string };
const BLOCKS: Patch[] = [];
const PATCHES: Patch[] = [];
const STREETS = ["url(#grid)", "url(#lanes)", "url(#curves)"];
const GREENS = ["#c8f5c8", "#add19e", "#cdebb0", "#add19e", "#b9e4b0", "#aad3df", "#8fdcb8"];
for (let c = 0; c < 20; c++) {
  for (let r = 0; r < 10; r++) {
    const x = Math.round(5 + c * 77.5);
    const y = r * 39 - 16;
    const west = c < 5;
    const density = west ? 0.72 : c < 18 ? 0.98 : 0.25;
    if (rnd() < density) {
      const kind = c > 5 && c < 12 ? (rnd() < 0.8 ? 0 : 1) : rnd() < 0.25 ? 0 : rnd() < 0.55 ? 1 : 2;
      const cut = west || c > 16 ? Math.round(rnd() * 30) : 0;
      BLOCKS.push({ d: `M${x} ${y}h${78 - cut}v${20}h${Math.round(cut / 2)}v19H${x}z`, fill: STREETS[kind] });
    }
    const open = west ? 2 : c < 12 ? 0 : 2;
    for (let k = 0; k < open; k++) {
      PATCHES.push({ d: blob(x + rnd() * 78, y + rnd() * 39, 6 + rnd() * (west ? 18 : 9), 5 + rnd() * 9), fill: "#f2efe9" });
    }
    const green = c < 12 ? 1 : c < 19 ? 4 : 1;
    for (let k = 0; k < green; k++) {
      if (rnd() < 0.65) {
        PATCHES.push({ d: blob(x + rnd() * 78, y + rnd() * 39, 3 + rnd() * (c > 12 ? 8 : 4), 3 + rnd() * 7), fill: GREENS[Math.floor(rnd() * 7)] });
      }
    }
  }
}
for (let k = 0; k < 70; k++) {
  PATCHES.push({ d: blob(1500 + rnd() * 630, rnd() * 370, 2 + rnd() * 3, 2 + rnd() * 4), fill: "#aad3df" });
}
const LANES: string[] = [];
for (let c = 0; c < 110; c++) {
  const x = Math.round(1430 + rnd() * 690);
  const y = Math.round(rnd() * 360);
  const a = Math.round(10 + rnd() * 26);
  const b = Math.round(8 + rnd() * 22);
  LANES.push(rnd() < 0.5 ? `M${x} ${y}h${a}v${b}h-${Math.round(a / 2)}` : `M${x} ${y}v${b}q4 8 ${a} 6M${x} ${y + 6}h${a}`);
}

function Roads({ shapes, casing, color, width }: { shapes: Shape[]; casing: string; color: string; width: number }) {
  return (
    <g fill="none" strokeLinejoin="round">
      {shapes.map(([s, p], i) => <path key={"c" + i} d={line(s, p)} stroke={casing} strokeWidth={width + 2} />)}
      {shapes.map(([s, p], i) => <path key={"f" + i} d={line(s, p)} stroke={color} strokeWidth={width} />)}
    </g>
  );
}

function MapDrawing() {
  return (
    <svg viewBox="0 0 2138 370" preserveAspectRatio="xMinYMin slice" className="block size-full" role="img" aria-label="Route map of Oklahoma City">
      <defs>
        <pattern id="grid" width="13" height="9" patternUnits="userSpaceOnUse"><rect width="13" height="9" fill="#dddddd" /><path d="M0 0H13M0 0V9M6 0V9" stroke="#cbcbcb" fill="none" /></pattern>
        <pattern id="lanes" width="26" height="20" patternUnits="userSpaceOnUse"><rect width="26" height="20" fill="#dddddd" /><path d="M0 4H18V20M8 4V14H26M18 12H26" stroke="#cbcbcb" fill="none" /></pattern>
        <pattern id="curves" width="30" height="26" patternUnits="userSpaceOnUse"><rect width="30" height="26" fill="#dddddd" /><path d="M0 6Q10 0 16 8T30 12M6 26Q8 12 16 8M20 26V18Q24 14 30 20" stroke="#cbcbcb" fill="none" /></pattern>
      </defs>
      <rect width="2138" height="370" fill="#f2efe9" />
      {BLOCKS.map((b, i) => <path key={i} d={b.d} fill={b.fill} />)}
      {PATCHES.map((b, i) => <path key={i} d={b.d} fill={b.fill} />)}
      {AREAS.map(([s, p, fill], i) => <path key={i} d={line(s, p) + "Z"} fill={fill} />)}
      <path d={LANES.join("")} fill="none" stroke="#cfccc8" strokeWidth="1" />
      <g fill="none" stroke="#aad3df" strokeLinejoin="round" strokeLinecap="round">
        {RIVER.map(([s, p], i) => <path key={i} d={line(s, p)} strokeWidth="9" />)}
        {CREEK.map(([s, p], i) => <path key={i} d={line(s, p)} strokeWidth="4" />)}
      </g>
      <path d={line("W", "700 712 780 712 900 620 960 570 1130 545 1210 545 1300 660 1370 720 1470 715")} fill="none" stroke="#5b8def" strokeWidth="1" strokeDasharray="8 6" />
      <path d={line("E", "840 55 840 1085")} fill="none" stroke="#cdbfae" strokeWidth="5" opacity="0.7" />
      <Roads shapes={WHITE} casing="#cccccc" color="#ffffff" width={2} />
      <Roads shapes={YELLOW} casing="#d8dba4" color="#f7fabf" width={4} />
      <Roads shapes={ORANGE} casing="#e6b87e" color="#fcd6a4" width={5} />
      <Roads shapes={RED} casing="#dc7f92" color="#e892a2" width={6} />
      <g fill="none">
        {RAIL.map(([s, p], i) => <path key={i} d={line(s, p)} stroke="#707070" strokeWidth="2" />)}
        {RAIL.map(([s, p], i) => <path key={i} d={line(s, p)} stroke="#b5b5b5" strokeWidth="1" strokeDasharray="8 8" />)}
        {BORDERS.map(([s, p], i) => <path key={i} d={line(s, p)} stroke="#b296b0" strokeWidth="2" strokeDasharray="9 3 2 3 2 3" opacity="0.7" />)}
      </g>
      <g fontFamily="'Noto Sans', sans-serif" fontStyle="italic" fontSize="16" textAnchor="middle" fill="#b0273f" stroke="#ffffff" strokeWidth="3" strokeOpacity="0.6" paintOrder="stroke">
        {EXITS.map(([s, x, y, t], i) => <text key={i} x={px(s, x)} y={py(y)} dy="3">{t}</text>)}
      </g>
      <g fontFamily="'Noto Sans', sans-serif" fill="#333333" stroke="#ffffff" strokeWidth="3" strokeOpacity="0.6" paintOrder="stroke">
        <text x="627" y="84" fontSize="22">Oklaho</text>
        <text x="661" y="114" fontSize="22">City</text>
        <text x="893" y="217" fontSize="16">Smith Village</text>
        <text x="980" y="265" fontSize="19">Del City</text>
        <text x="1150" y="224" fontSize="19">Midwest City</text>
      </g>
      <g transform="rotate(90 16 126)"><text x="16" y="128" fontSize="16" fontFamily="'Noto Sans', sans-serif" fill="#9a7f9c">nty</text></g>
      <g transform="translate(155 359)">
        <rect width="58" height="30" rx="3" fill="#f0b8c0" stroke="#dc7f92" />
        <text x="29" y="20" fontSize="18" fontWeight="600" textAnchor="middle" fontFamily="'Noto Sans', sans-serif" fill="#9c2338">I 240</text>
      </g>
      <g fill="none" stroke="#3b74ea" strokeWidth="6" strokeLinejoin="round" opacity="0.85"><path d={ROUTE} /><path d={ROUTE_END} /></g>
      {([[719, 89, 1], [1032, 236, 2], [1231, 182, 3]] as const).map(([x, y, n]) => (
        <g key={n}>
          <circle cx={x} cy={y + 2} r="21" fill="#000000" opacity="0.2" />
          <circle cx={x} cy={y} r="18" fill="#3b82f6" stroke="#ffffff" strokeWidth="3" />
          <text x={x} y={y + 6} textAnchor="middle" fontSize="17" fontWeight="700" fill="#ffffff" fontFamily="'Noto Sans', sans-serif">{n}</text>
        </g>
      ))}
    </svg>
  );
}

function RoutePanel() {
  return (
    <section className="flex min-h-0 flex-1 flex-col border-t border-[#e5e7eb] bg-white">
      <div className="flex h-[84px] shrink-0 items-center px-9">
        <h2 className="text-[21px] font-semibold text-[#111827]">Riley Demo's Route</h2>
        <div className="ml-[18px] flex h-[60px] items-center gap-6 rounded-xl bg-[#f9fafb] px-6 text-[21px] text-[#374151]">
          <span className="flex items-center gap-[9px]"><MapPin className="size-6 text-[#3b82f6]" /><span className="flex gap-[9px]"><span>3</span><span>stops</span></span></span>
          <span className="flex items-center gap-[9px]"><Clock className="size-6 text-[#3b82f6]" />19 min drive</span>
          <span className="flex items-center gap-[9px]"><Navigation className="size-6 text-[#3b82f6]" />9.4 mi</span>
          <span className="flex h-[30px] items-center rounded-full bg-[#d1fae5] px-3 text-[18px] font-medium text-[#047857]">Optimized</span>
        </div>
        <button className="ml-auto text-[18px] text-[#6b7280]">Close map</button>
      </div>
      <div className="relative min-h-0 flex-1 overflow-hidden rounded-t-2xl border border-b-0 border-[#e5e7eb]">
        <MapDrawing />
        <div className="absolute top-[14px] left-[15px] flex flex-col rounded-lg border-[3px] border-black/25 bg-clip-padding text-black">
          <button aria-label="Zoom in" className="flex size-[45px] items-center justify-center rounded-t-sm border-b border-[#cccccc] bg-white"><Plus className="size-7" strokeWidth={2.5} /></button>
          <button aria-label="Zoom out" className="flex size-[45px] items-center justify-center rounded-b-sm bg-white"><span className="h-[3px] w-[18px] bg-black" /></button>
        </div>
        <div className="absolute right-0 -bottom-[13px] flex h-[27px] items-center gap-1 bg-white/80 px-[7px] text-[18px] text-[#333333]">
          <svg viewBox="0 0 18 12" className="h-3 w-[18px]"><path fill="#4c7be1" d="M0 0h18v6H0z" /><path fill="#ffd500" d="M0 6h18v6H0z" /></svg>
          <a href="#" className="text-[#0078a8]">Leaflet</a>|<span>©</span>
          <a href="#" className="text-[#0078a8]">OpenStreetMap</a>
        </div>
      </div>
    </section>
  );
}

/* ---------- Page ---------- */

export default function App() {
  return (
    <div className="flex h-screen flex-col overflow-hidden bg-[#f3f4f6] font-['Inter',sans-serif]">
      <BrowserChrome />
      <div className="relative flex min-h-0 flex-1">
        <Sidebar />
        <div className="flex min-w-0 flex-1 flex-col">
          <TopBar />
          <main className="flex min-h-0 flex-1 flex-col pt-9 pr-[35px] pl-9">
            <BoardHeader />
            <p role="status" className="flex h-[42px] shrink-0 items-center bg-[#ecfdf5] px-9 text-[18px] text-[#047857]">Riley Demo's route optimized!</p>
            <Board />
            <RoutePanel />
          </main>
        </div>
        <VScroll thumb="h-[1154px]" className="bg-[#f7f7f8] py-1" />
        <button aria-label="Collapse sidebar" className="absolute top-[669px] left-[336px] flex h-[60px] w-[30px] items-center justify-center rounded-r-lg border border-l-0 border-[#d1d5dc] bg-[#e5e7eb] text-[#6b7280]">
          <ChevronLeft className="size-[18px]" />
        </button>
        <button className="absolute right-10 bottom-6 flex h-[72px] items-center gap-[11px] rounded-full bg-white px-6 font-['Noto_Sans',sans-serif] text-[20px] font-medium text-[#1f2937] shadow-xl">
          <MegaphoneIcon className="size-[26px]" />Report Bug
        </button>
      </div>
    </div>
  );
}
